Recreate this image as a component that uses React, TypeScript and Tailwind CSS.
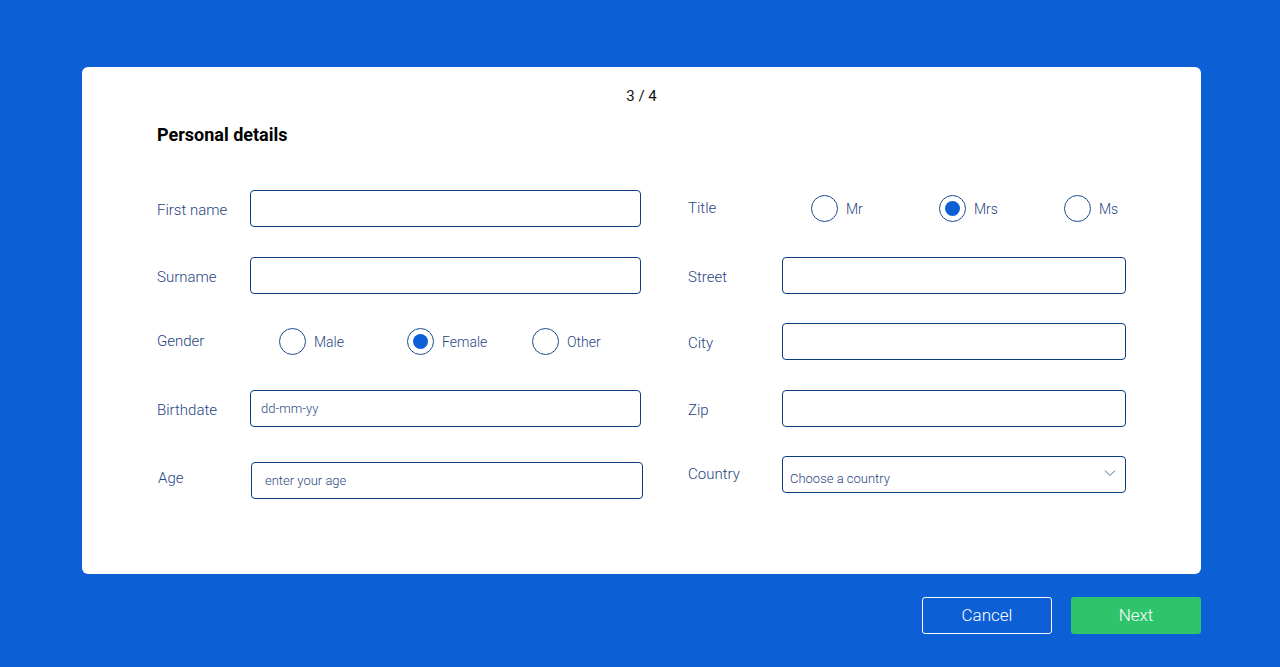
import { useState } from "react";

type Option = { value: string; label: string };

const genders: Option[] = [
  { value: "male", label: "Male" },
  { value: "female", label: "Female" },
  { value: "other", label: "Other" },
];

const titles: Option[] = [
  { value: "mr", label: "Mr" },
  { value: "mrs", label: "Mrs" },
  { value: "ms", label: "Ms" },
];

const labelCls = "text-[15px] font-light text-[#1f447f]";
const inputCls =
  "h-[37px] rounded-[4px] border border-[#0c3f7e] bg-white px-[10px] text-[13px] font-light text-[#1f447f] outline-none placeholder:text-[#2a4a80]";

const RadioGroup: React.FC<{
  name: string;
  options: Option[];
  value: string;
  onChange: (v: string) => void;
}> = ({ name, options, value, onChange }) => (
  <div className="grid grid-cols-[128px_125px_auto] pl-[29px]">
    {options.map((o) => (
      <label key={o.value} className="flex cursor-pointer items-center gap-[8px]">
        <input
          type="radio"
          name={name}
          className="hidden"
          checked={value === o.value}
          onChange={() => onChange(o.value)}
        />
        <span className="flex h-[27px] w-[27px] items-center justify-center rounded-full border-[1.5px] border-[#1b4a8c] bg-white">
          {value === o.value && (
            <span className="h-[15px] w-[15px] rounded-full bg-[#0d5fd6]" />
          )}
        </span>
        <span className="mt-[2px] text-[14px] font-light text-[#1f447f]">{o.label}</span>
      </label>
    ))}
  </div>
);

const Row: React.FC<{
  label: string;
  labelW: string;
  children: React.ReactNode;
  className?: string;
  labelOffset?: string;
}> = ({ label, labelW, children, className = "", labelOffset = "mt-[3px]" }) => (
  <div className={`flex h-[37px] items-center ${className}`}>
    <span className={`${labelCls} ${labelW} ${labelOffset} shrink-0`}>{label}</span>
    <div className="flex-1">{children}</div>
  </div>
);

export default function App() {
  const [gender, setGender] = useState("female");
  const [title, setTitle] = useState("mrs");

  return (
    <div
      className="min-h-[667px] bg-[#0d5fd6] px-[82px] pt-[67px]"
      style={{ fontFamily: "Roboto, 'Noto Sans', sans-serif" }}
    >
      <div className="h-[507px] w-[1119px] rounded-[6px] bg-white">
        {/* step counter */}
        <div className="pt-[19px] text-center text-[15px] leading-[20px] text-[#111]">3 / 4</div>
        <h2 className="mt-[19px] pl-[75px] text-[18px] font-bold leading-[20px] text-black">Personal details</h2>

        <div className="mt-[45px] flex pl-[75px]">
          {/* left column */}
          <div className="flex w-[484px] flex-col">
            <Row label="First name" labelW="w-[93px]">
              <input className={`${inputCls} w-full`} />
            </Row>
            <Row label="Surname" labelW="w-[93px]" className="mt-[30px]">
              <input className={`${inputCls} w-full`} />
            </Row>
            <Row label="Gender" labelW="w-[93px]" className="mt-[29px]" labelOffset="mt-0">
              <RadioGroup name="gender" options={genders} value={gender} onChange={setGender} />
            </Row>
            <Row label="Birthdate" labelW="w-[93px]" className="mt-[30px]">
              <input className={`${inputCls} w-full text-[13.5px]`} placeholder="dd-mm-yy" />
            </Row>
            <Row label="Age" labelW="w-[94px] pl-[1px]" className="mt-[35px]" labelOffset="-mt-[4px]">
              <input className={`${inputCls} w-[392px] pl-[13px]`} placeholder="enter your age" />
            </Row>
          </div>

          {/* right column */}
          <div className="ml-[47px] flex w-[438px] flex-col">
            <Row label="Title" labelW="w-[94px]" labelOffset="mt-0">
              <RadioGroup name="title" options={titles} value={title} onChange={setTitle} />
            </Row>
            <Row label="Street" labelW="w-[94px]" className="mt-[30px]">
              <input className={`${inputCls} w-full`} />
            </Row>
            <Row label="City" labelW="w-[94px]" className="mt-[29px]">
              <input className={`${inputCls} w-full`} />
            </Row>
            <Row label="Zip" labelW="w-[94px]" className="mt-[30px]">
              <input className={`${inputCls} w-full`} />
            </Row>
            <Row label="Country" labelW="w-[94px]" className="mt-[29px]" labelOffset="mt-0">
              <div className="relative">
                <select
                  defaultValue=""
                  className={`${inputCls} w-full appearance-none pt-[8px] pl-[7px] text-[12px] text-[#1f447f]`}
                >
                  <option value="" disabled>
                    Choose a country
                  </option>
                  <option>Germany</option>
                  <option>France</option>
                  <option>Spain</option>
                </select>
                <svg
                  className="pointer-events-none absolute right-[10px] top-[13px]"
                  width="12"
                  height="8"
                  viewBox="0 0 12 8"
                  fill="none"
                >
                  <path d="M1 1.5 6 6.5 11 1.5" stroke="#4a6a9a" strokeWidth="1" />
                </svg>
              </div>
            </Row>
          </div>
        </div>
      </div>

      <div className="mt-[23px] flex w-[1119px] justify-end gap-[19px]">
        <button className="h-[37px] w-[130px] rounded-[3px] border border-white text-[17px] font-light text-white">
          Cancel
        </button>
        <button className="h-[37px] w-[130px] rounded-[3px] bg-[#2ec46c] text-[17px] font-light text-white">
          Next
        </button>
      </div>
    </div>
  );
}
